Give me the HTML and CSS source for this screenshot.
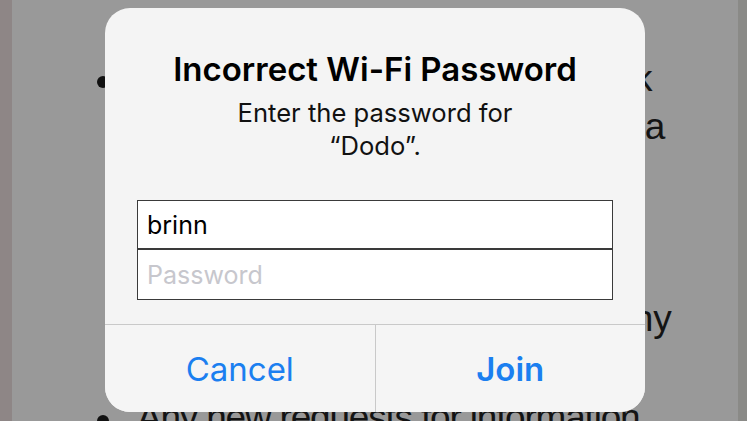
FILE: index.html
```html
<!DOCTYPE html>
<html lang="en">
<head>
    <meta charset="UTF-8">
    <meta name="viewport" content="width=device-width, initial-scale=1.0">
    <title>Incorrect Wi-Fi Password</title>
    <link rel="stylesheet" href="styles.css">
</head>
<body>
    <div class="screen">
        <div class="edge-left"></div>
        <div class="page">
            <ul class="notes">
                <li>
                    <div class="line tight">The phone will ask you to check</div>
                    <div class="line loose">the password again and enter a</div>
                    <div class="line">new one for the network</div>
                    <div class="line">before it joins again,</div>
                    <div class="line">and the old one is gone</div>
                    <div class="line">and it will not be shared with any</div>
                    <div class="line">other device.</div>
                </li>
                <li>
                    <div class="line narrow">Any new requests for information</div>
                </li>
            </ul>
        </div>
        <div class="edge-right"></div>

        <div class="alert">
            <div class="alert-body">
                <h1 class="alert-title">Incorrect Wi-Fi Password</h1>
                <p class="alert-message">Enter the password for<br>&ldquo;Dodo&rdquo;.</p>
                <div class="fields">
                    <input class="field field-user" type="text" value="brinn">
                    <input class="field field-pass" type="password" placeholder="Password">
                </div>
            </div>
            <div class="actions">
                <button class="action">Cancel</button>
                <button class="action action-main">Join</button>
            </div>
        </div>
    </div>
</body>
</html>
```

FILE: styles.css
```css
html, body {
    margin: 0;
    padding: 0;
}
body {
    width: 747px;
    height: 421px;
    overflow: hidden;
    background-color: #999999;
    font-family: "Inter", "Liberation Sans", sans-serif;
}
.screen {
    position: relative;
    display: flex;
    height: 421px;
}
.edge-left {
    width: 12px;
    background-color: #8e8686;
}
.edge-right {
    width: 9px;
    background-color: #8a8a87;
}
.page {
    flex: 1;
    overflow: hidden;
}

/* dimmed page behind the alert */
.notes {
    margin: 0;
    padding: 55px 0 0 125px;
    list-style: none;
    font-family: "Liberation Sans", sans-serif;
    font-size: 37px;
    line-height: 48px;
    color: #141414;
}
.notes li {
    position: relative;
    margin-bottom: 3px;
}
.notes li::before {
    content: "";
    position: absolute;
    left: -40px;
    top: 21px;
    width: 12px;
    height: 12px;
    border-radius: 50%;
    background-color: #111;
}
.line {
    white-space: nowrap;
}
.tight {
    word-spacing: -1.5px;
}
.loose {
    word-spacing: 2px;
}
.narrow {
    letter-spacing: -1.2px;
}

/* alert */
.alert {
    position: absolute;
    left: 105px;
    top: 8px;
    width: 540px;
    height: 404px;
    border-radius: 25px;
    background-color: #f4f4f4;
    overflow: hidden;
    display: flex;
    flex-direction: column;
}
.alert-body {
    flex: 1;
    padding: 42px 32px 0;
    text-align: center;
}
.alert-title {
    margin: 0;
    font-size: 33px;
    line-height: 38px;
    font-weight: 600;
    color: #000;
}
.alert-message {
    margin: 8px 0 0;
    font-size: 25.6px;
    line-height: 33px;
    color: #111;
}
.fields {
    display: flex;
    flex-direction: column;
    margin-top: 38px;
}
.field {
    box-sizing: border-box;
    height: 50px;
    margin: 0;
    padding: 0 9px;
    border: 1px solid #3a3a3a;
    background-color: #fff;
    font-family: inherit;
    font-size: 25px;
    color: #000;
    outline: none;
}
.field-user {
    border-bottom-width: 2px;
}
.field-pass {
    border-top: none;
}
.field::placeholder {
    color: #c7c7cd;
}
.actions {
    display: flex;
    height: 87px;
    border-top: 1px solid #c9c9c9;
}
.action {
    flex: 1;
    border: none;
    background-color: #f5f5f5;
    font-family: inherit;
    font-size: 33px;
    color: #1b7ff0;
    padding: 0;
    cursor: pointer;
}
.action + .action {
    border-left: 1px solid #c9c9c9;
}
.action-main {
    font-weight: 600;
}
```
